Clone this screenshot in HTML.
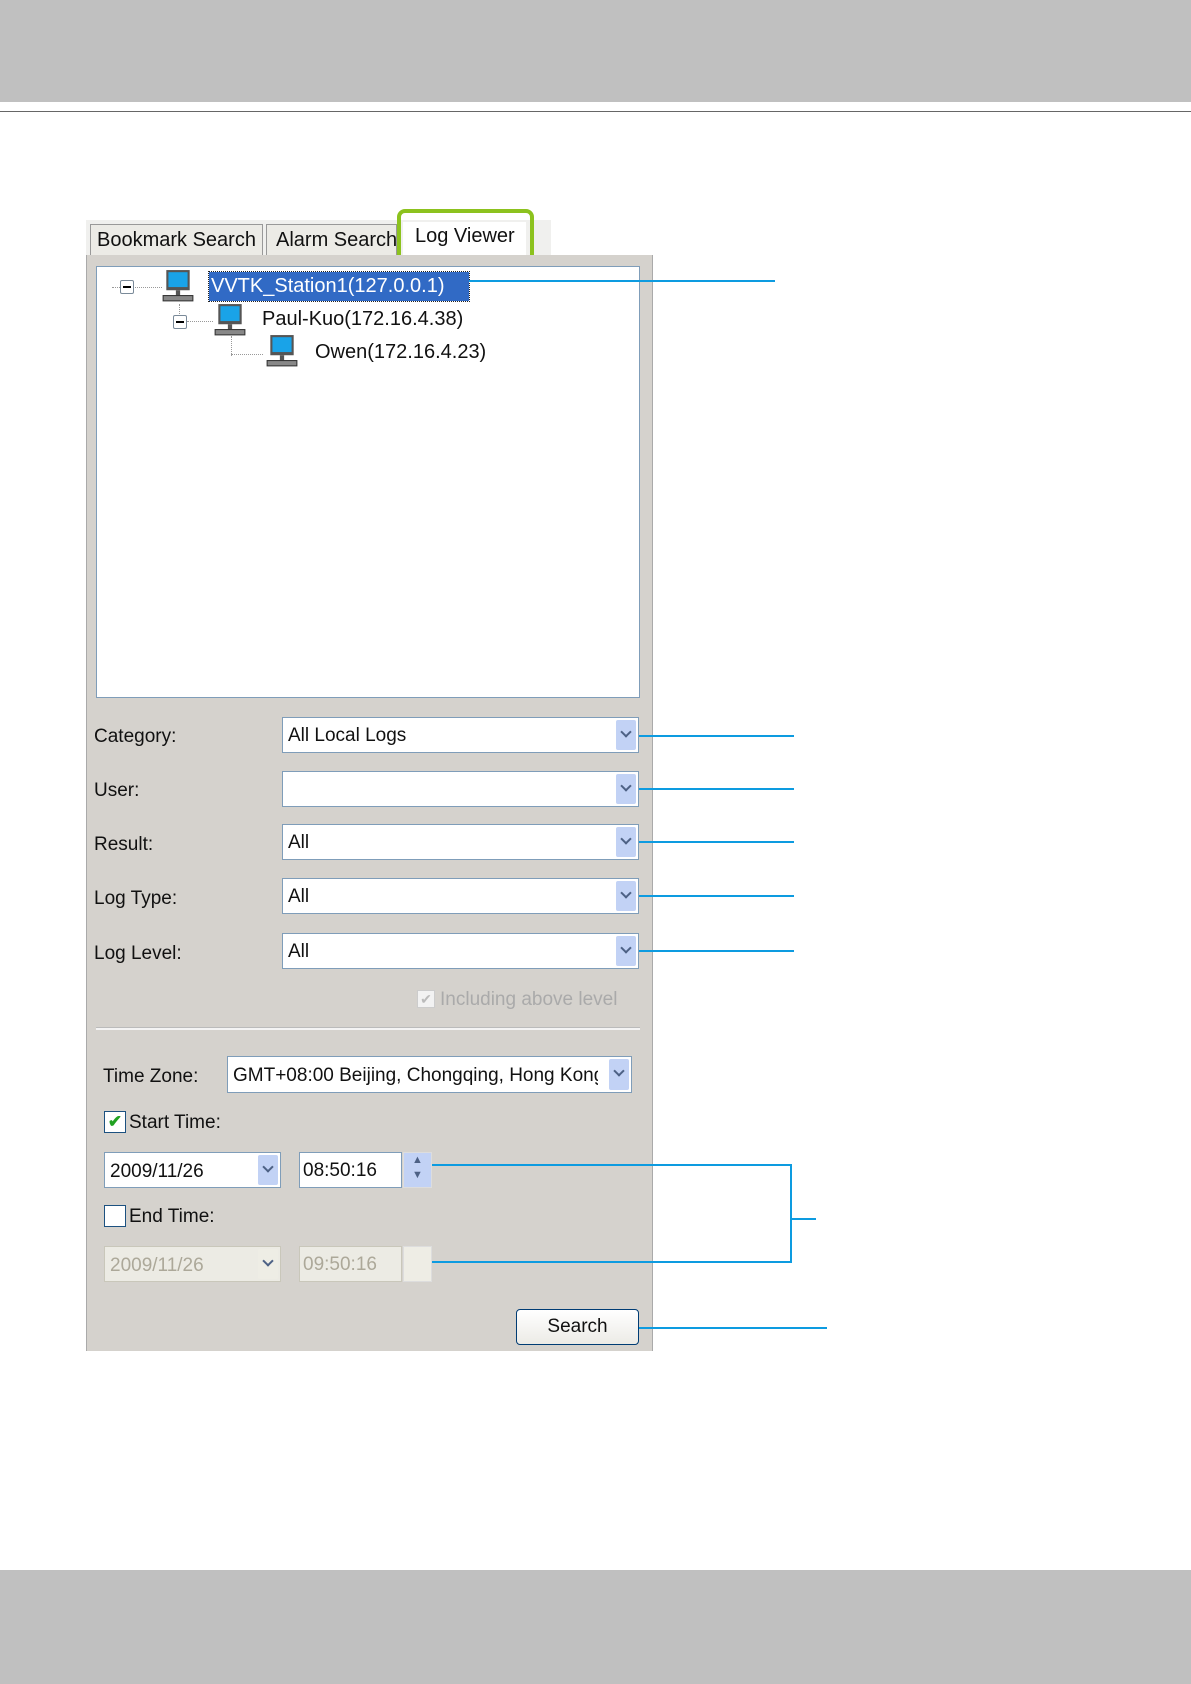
<!DOCTYPE html>
<html><head><style>
body{margin:0;width:1191px;height:1684px;position:relative;background:#fff;font-family:"Liberation Sans",sans-serif;overflow:hidden}
.a{position:absolute}
.t{font-size:19px;color:#111;white-space:nowrap}
.dd{position:absolute;background:#fff;border:1px solid #7f9db9;box-sizing:border-box}
.arr{position:absolute;right:2px;top:2px;bottom:2px;width:20px;background:#c2d2f5;border-radius:2px}
.arr:after{content:"";position:absolute;left:6px;top:8px;width:6px;height:6px;border-right:2px solid #4d6185;border-bottom:2px solid #4d6185;transform:rotate(45deg)}
.ln{position:absolute;background:#0d9be0;height:2px}
.mon{position:absolute;width:32px;height:34px}
</style></head><body>
<div class="a" style="left:0;top:0;width:1191px;height:102px;background:#c0c0c0"></div>
<div class="a" style="left:0;top:111px;width:1191px;height:1px;background:#666"></div>
<div class="a" style="left:0;top:1570px;width:1191px;height:114px;background:#c0c0c0"></div>

<!-- tabs -->
<div class="a" style="left:86px;top:220px;width:465px;height:35px;background:#f0f0ee"></div>
<div class="a t" style="left:90px;top:224px;width:173px;height:31px;border:1px solid #999;border-bottom:none;background:#ecebe6;padding-left:6px;box-sizing:border-box;line-height:31px;font-size:20px">Bookmark Search</div>
<div class="a t" style="left:266px;top:224px;width:131px;height:31px;border:1px solid #999;border-bottom:none;background:#ecebe6;padding-left:9px;box-sizing:border-box;line-height:31px;font-size:20px;overflow:hidden">Alarm Search</div>
<div class="a t" style="left:403px;top:222px;width:123px;height:36px;background:#fff;padding-left:12px;box-sizing:border-box;line-height:28px;font-size:20px">Log Viewer</div>
<div class="a" style="left:397px;top:209px;width:137px;height:54px;border:4px solid #8cc21e;border-radius:8px;box-sizing:border-box"></div>

<!-- panel -->
<div class="a" style="left:86px;top:255px;width:567px;height:1096px;background:#d5d2cd;border-left:1px solid #aaa;border-right:1px solid #aaa;box-sizing:border-box"></div>
<div class="a" style="left:96px;top:266px;width:544px;height:432px;background:#fff;border:1px solid #7f9db9;box-sizing:border-box"></div>
<!-- tree -->
<div class="a" style="left:112px;top:287px;width:50px;border-top:1px dotted #999"></div>
<div class="a" style="left:120px;top:280px;width:12px;height:12px;border:1px solid #7a8a99;background:#fff;border-radius:2px"><div style="margin:5px 2px;height:2px;background:#000"></div></div>
<div class="a" style="left:179px;top:304px;height:18px;border-left:1px dotted #999"></div>
<div class="a" style="left:173px;top:315px;width:12px;height:12px;border:1px solid #7a8a99;background:#fff;border-radius:2px"><div style="margin:5px 2px;height:2px;background:#000"></div></div>
<div class="a" style="left:187px;top:321px;width:26px;border-top:1px dotted #999"></div>
<div class="a" style="left:231px;top:336px;height:20px;border-left:1px dotted #999"></div>
<div class="a" style="left:231px;top:354px;width:32px;border-top:1px dotted #999"></div>
<svg class="mon" style="left:162px;top:269px" viewBox="0 0 30 32"><rect x="4" y="1" width="22" height="19" fill="#555"/><rect x="6" y="3" width="18" height="14" fill="#19a3e8"/><rect x="13" y="20" width="4" height="5" fill="#555"/><rect x="1" y="25" width="28" height="5" fill="#888" stroke="#333"/></svg>
<svg class="mon" style="left:214px;top:303px" viewBox="0 0 30 32"><rect x="4" y="1" width="22" height="19" fill="#555"/><rect x="6" y="3" width="18" height="14" fill="#19a3e8"/><rect x="13" y="20" width="4" height="5" fill="#555"/><rect x="1" y="25" width="28" height="5" fill="#888" stroke="#333"/></svg>
<svg class="mon" style="left:266px;top:334px" viewBox="0 0 30 32"><rect x="4" y="1" width="22" height="19" fill="#555"/><rect x="6" y="3" width="18" height="14" fill="#19a3e8"/><rect x="13" y="20" width="4" height="5" fill="#555"/><rect x="1" y="25" width="28" height="5" fill="#888" stroke="#333"/></svg>
<div class="a t" style="left:209px;top:272px;width:260px;height:29px;background:#316ac5;color:#fff;outline:1px dotted #222;line-height:29px;padding-left:2px;box-sizing:border-box;font-size:20px">VVTK_Station1(127.0.0.1)</div>
<div class="a t" style="left:262px;top:308px;font-size:20px">Paul-Kuo(172.16.4.38)</div>
<div class="a t" style="left:315px;top:341px;font-size:20px">Owen(172.16.4.23)</div>
<div class="ln" style="left:469px;top:280px;width:306px"></div>

<!-- fields -->
<div class="a t" style="left:94px;top:726px">Category:</div>
<div class="dd" style="left:282px;top:717px;width:357px;height:36px"><span class="t" style="position:absolute;left:5px;top:7px">All Local Logs</span><div class="arr"></div></div>
<div class="a t" style="left:94px;top:780px">User:</div>
<div class="dd" style="left:282px;top:771px;width:357px;height:36px"><div class="arr"></div></div>
<div class="a t" style="left:94px;top:834px">Result:</div>
<div class="dd" style="left:282px;top:824px;width:357px;height:36px"><span class="t" style="position:absolute;left:5px;top:7px">All</span><div class="arr"></div></div>
<div class="a t" style="left:94px;top:888px">Log Type:</div>
<div class="dd" style="left:282px;top:878px;width:357px;height:36px"><span class="t" style="position:absolute;left:5px;top:7px">All</span><div class="arr"></div></div>
<div class="a t" style="left:94px;top:943px">Log Level:</div>
<div class="dd" style="left:282px;top:933px;width:357px;height:36px"><span class="t" style="position:absolute;left:5px;top:7px">All</span><div class="arr"></div></div>
<div class="ln" style="left:639px;top:735px;width:155px"></div>
<div class="ln" style="left:639px;top:788px;width:155px"></div>
<div class="ln" style="left:639px;top:841px;width:155px"></div>
<div class="ln" style="left:639px;top:895px;width:155px"></div>
<div class="ln" style="left:639px;top:950px;width:155px"></div>
<div class="a" style="left:417px;top:990px;width:16px;height:16px;background:#f2f2f2;border:1px solid #ccc;color:#bbb;font-size:14px;line-height:16px;text-align:center">✔</div>
<div class="a t" style="left:440px;top:989px;color:#aaa">Including above level</div>
<div class="a" style="left:96px;top:1027px;width:544px;height:2px;background:#f4f4f4;border-top:1px solid #bbb"></div>

<div class="a t" style="left:103px;top:1066px">Time Zone:</div>
<div class="dd" style="left:227px;top:1056px;width:405px;height:37px"><span class="t" style="position:absolute;left:5px;top:8px;width:365px;overflow:hidden">GMT+08:00 Beijing, Chongqing, Hong Kong</span><div class="arr"></div></div>
<div class="a" style="left:104px;top:1111px;width:20px;height:20px;border:1px solid #1c5180;background:#fff;color:#21a121;font-size:17px;line-height:20px;text-align:center;font-weight:bold">✔</div>
<div class="a t" style="left:129px;top:1112px">Start Time:</div>
<div class="dd" style="left:104px;top:1152px;width:177px;height:36px"><span class="t" style="position:absolute;left:5px;top:8px">2009/11/26</span><div class="arr"></div></div>
<div class="dd" style="left:299px;top:1152px;width:103px;height:36px"><span class="t" style="position:absolute;left:3px;top:7px">08:50:16</span></div>
<div class="a" style="left:403px;top:1152px;width:29px;height:36px;background:#c2d2f5;border:1px solid #ddd;box-sizing:border-box;color:#4d6185;font-size:11px;text-align:center;line-height:15px">▲<br>▼</div>
<div class="a" style="left:104px;top:1205px;width:20px;height:20px;border:1px solid #1c5180;background:#fff"></div>
<div class="a t" style="left:129px;top:1206px">End Time:</div>
<div class="dd" style="left:104px;top:1246px;width:177px;height:36px;background:#ecebe4;border-color:#c9c7ba"><span class="t" style="position:absolute;left:5px;top:8px;color:#aca899">2009/11/26</span><div class="arr" style="background:#eeede5"></div></div>
<div class="dd" style="left:299px;top:1246px;width:103px;height:36px;background:#ecebe4;border-color:#c9c7ba"><span class="t" style="position:absolute;left:3px;top:7px;color:#aca899">09:50:16</span></div>
<div class="a" style="left:403px;top:1246px;width:29px;height:36px;background:#eeede5;border:1px solid #ddd;box-sizing:border-box"></div>
<div class="ln" style="left:432px;top:1164px;width:360px"></div>
<div class="ln" style="left:432px;top:1261px;width:360px"></div>
<div class="a" style="left:790px;top:1164px;width:2px;height:99px;background:#0d9be0"></div>
<div class="ln" style="left:790px;top:1218px;width:26px"></div>
<div class="a t" style="left:516px;top:1309px;width:123px;height:36px;border:1px solid #003c74;border-radius:4px;background:linear-gradient(#fff,#ecebe6);box-sizing:border-box;text-align:center;line-height:34px">Search</div>
<div class="ln" style="left:639px;top:1327px;width:188px"></div>
</body></html>
